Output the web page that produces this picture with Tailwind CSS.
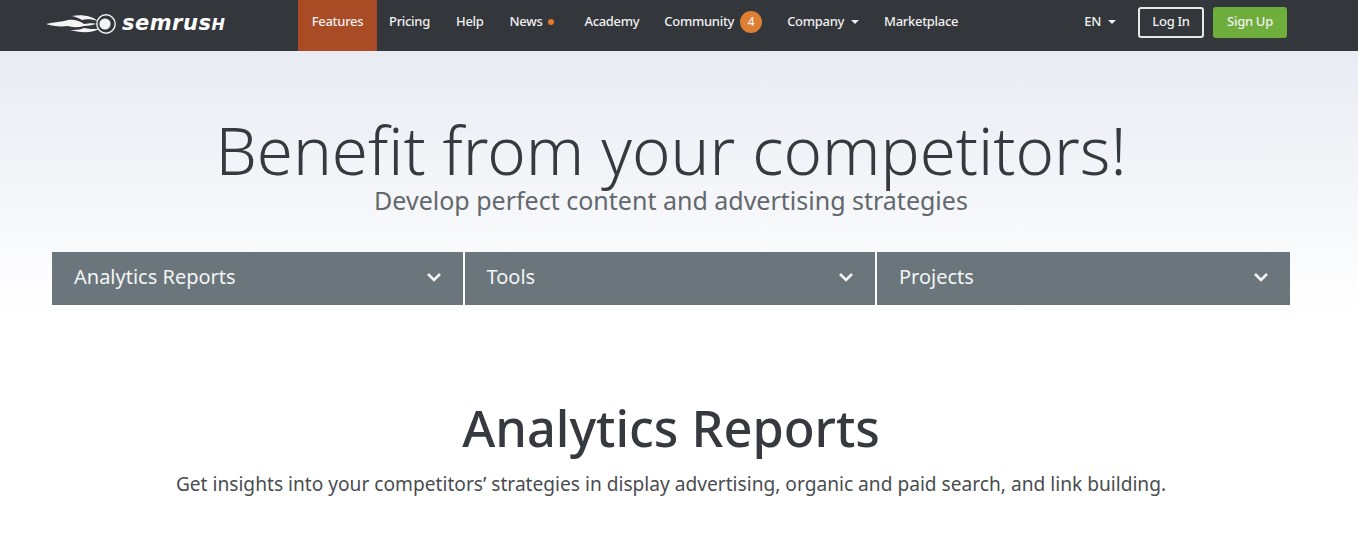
<!DOCTYPE html>
<html lang="en">
<head>
    <meta charset="UTF-8">
    <meta name="viewport" content="width=device-width, initial-scale=1.0">
    <title>SEMrush Features</title>
    <script src="https://cdn.jsdelivr.net/npm/@tailwindcss/browser@4"></script>
</head>
<body class="bg-white h-[559px] overflow-hidden font-['Noto_Sans',sans-serif]">
    <header class="h-[51px] bg-[#33363b] flex items-center pb-[7px] text-[13px] font-medium text-[#f0f0f0] tracking-[-0.3px]">
        <a href="#" class="flex items-center ml-[46px] w-[252px] mt-[3px]">
            <svg width="70" height="22" viewBox="0 0 70 22" fill="none">
                <path d="M26 3 C36 1 46 3 52 8 C46 6 40 6 36 7 C33 5 30 4 26 3Z" fill="#f4f4f4"/>
                <path d="M0 11 C8 9 16 9 22 7 C28 6 34 8 38 11 C44 10 48 10 50 11 C46 12 42 13 38 13 C30 15 26 14 22 13 C14 14 6 13 0 11Z" fill="#f4f4f4"/>
                <path d="M24 17 C32 19 44 21 53 16 C47 16 42 16 38 15 C34 17 28 17 24 17Z" fill="#f4f4f4"/>
                <circle cx="60" cy="11" r="9.2" stroke="#f4f4f4" stroke-width="1.4"/>
                <circle cx="59" cy="11" r="5.6" fill="#f4f4f4"/>
            </svg>
            <span class="ml-[6px] text-[21px] leading-none font-bold italic tracking-[0.5px] text-white font-['DejaVu_Sans',sans-serif]">semrus<span class="uppercase text-[16px]">h</span></span>
        </a>
        <nav class="flex items-center h-full">
            <a href="#" class="h-[51px] mt-[7px] pb-[7px] w-[79px] bg-[#a94b24] flex items-center justify-center">Features</a>
            <a href="#" class="ml-[12px]">Pricing</a>
            <a href="#" class="ml-[26px]">Help</a>
            <a href="#" class="ml-[26px] flex items-center">News<span class="ml-[6px] w-[6px] h-[6px] rounded-full bg-[#e07b2c]"></span></a>
            <a href="#" class="ml-[30px]">Academy</a>
            <a href="#" class="ml-[25px]">Community</a>
            <span class="ml-[6px] w-[22px] h-[22px] rounded-full bg-[#dd7e32] flex items-center justify-center text-[12px]">4</span>
            <a href="#" class="ml-[25px] flex items-center">Company<span class="ml-[7px] border-x-[4px] border-t-[4px] border-x-transparent border-t-[#f0f0f0]"></span></a>
            <a href="#" class="ml-[25px]">Marketplace</a>
        </nav>
        <div class="ml-auto flex items-center mr-[71px]">
            <a href="#" class="flex items-center">EN<span class="ml-[7px] border-x-[4px] border-t-[4px] border-x-transparent border-t-[#f0f0f0]"></span></a>
            <a href="#" class="ml-[22px] w-[66px] h-[31px] border-2 border-[#e8e8e8] rounded-[3px] flex items-center justify-center">Log In</a>
            <a href="#" class="ml-[9px] w-[74px] h-[31px] bg-[#6fae3c] rounded-[3px] flex items-center justify-center">Sign Up</a>
        </div>
    </header>
    <main>
        <section class="h-[262px] bg-gradient-to-b from-[#e8ebf2] to-white pt-[65px]">
            <div class="ml-[52px] w-[1238px]">
                <h1 class="text-center text-[65.4px] leading-[68px] font-light text-[#36393d]">Benefit from your competitors!</h1>
                <p class="text-center text-[25px] leading-[32px] text-[#62686c]">Develop perfect content and advertising strategies</p>
                <div class="mt-[36px] h-[53px] grid grid-cols-[410.5px_410.5px_1fr] gap-[2px] text-[20px] text-[#f3f5f5]">
                    <a href="#" class="bg-[#6a767b] flex items-center justify-between pl-[22px] pr-[21px] pb-[4px]">Analytics Reports
                        <svg width="16" height="10" viewBox="0 0 16 10" fill="none"><path d="M2 2 L8 8 L14 2" stroke="#f5f5f5" stroke-width="2.6"/></svg>
                    </a>
                    <a href="#" class="bg-[#6a767b] flex items-center justify-between pl-[22px] pr-[21px] pb-[4px]">Tools
                        <svg width="16" height="10" viewBox="0 0 16 10" fill="none"><path d="M2 2 L8 8 L14 2" stroke="#f5f5f5" stroke-width="2.6"/></svg>
                    </a>
                    <a href="#" class="bg-[#6a767b] flex items-center justify-between pl-[22px] pr-[21px] pb-[4px]">Projects
                        <svg width="16" height="10" viewBox="0 0 16 10" fill="none"><path d="M2 2 L8 8 L14 2" stroke="#f5f5f5" stroke-width="2.6"/></svg>
                    </a>
                </div>
            </div>
        </section>
        <section class="pt-[84px] ml-[52px] w-[1238px] text-center">
            <h2 class="text-[50.5px] leading-[62px] font-medium text-[#36393d]">Analytics Reports</h2>
            <p class="mt-[11px] text-[19.15px] leading-[28px] text-[#4a4d50]">Get insights into your competitors’ strategies in display advertising, organic and paid search, and link building.</p>
        </section>
    </main>
</body>
</html>
